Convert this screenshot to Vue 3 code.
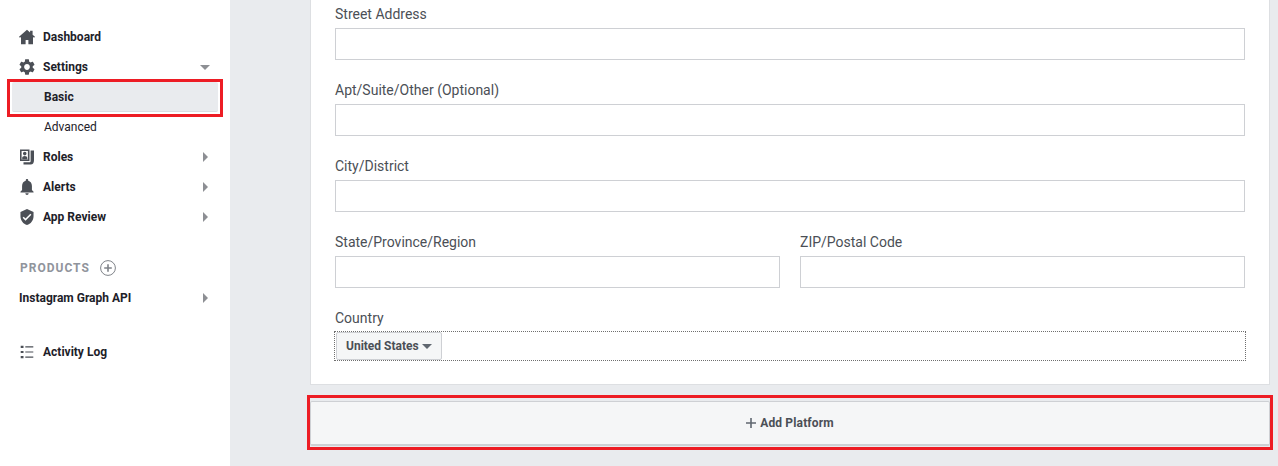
<script setup>
const form = [
  [{ label: 'Street Address' }],
  [{ label: 'Apt/Suite/Other (Optional)' }],
  [{ label: 'City/District' }],
  [{ label: 'State/Province/Region' }, { label: 'ZIP/Postal Code' }],
]
</script>

<template>
  <div class="page">
    <aside class="sidebar">
      <nav class="nav">
        <a class="item">
          <svg class="icon" viewBox="0 1 16 14.5"><path d="M8 1 0 8l.9 1.1L2 8.2v7.3h4.6v-4.3h2.8v4.3H14V8.2l1.1.9L16 8l-2.4-2.1V2h-2.5v1.7z" /></svg>
          <span>Dashboard</span>
        </a>
        <a class="item">
          <svg class="icon" viewBox="2.3 2 19.4 20"><path d="M19.14 12.94c.04-.3.06-.61.06-.94 0-.32-.02-.64-.07-.94l2.03-1.58c.18-.14.23-.41.12-.61l-1.92-3.32c-.12-.22-.37-.29-.59-.22l-2.39.96c-.5-.38-1.03-.7-1.62-.94l-.36-2.54c-.04-.24-.24-.41-.48-.41h-3.84c-.24 0-.43.17-.47.41l-.36 2.54c-.59.24-1.13.57-1.62.94l-2.39-.96c-.22-.08-.47 0-.59.22L2.74 8.87c-.12.21-.08.47.12.61l2.03 1.58c-.05.3-.09.63-.09.94s.02.64.07.94l-2.03 1.58c-.18.14-.23.41-.12.61l1.92 3.32c.12.22.37.29.59.22l2.39-.96c.5.38 1.03.7 1.62.94l.36 2.54c.05.24.24.41.48.41h3.84c.24 0 .44-.17.47-.41l.36-2.54c.59-.24 1.13-.56 1.62-.94l2.39.96c.22.08.47 0 .59-.22l1.92-3.32c.12-.22.07-.47-.12-.61l-2.01-1.58zM12 15.6c-1.98 0-3.6-1.62-3.6-3.6s1.62-3.6 3.6-3.6 3.6 1.62 3.6 3.6-1.62 3.6-3.6 3.6z" /></svg>
          <span>Settings</span>
          <i class="caret-down"></i>
        </a>
        <a class="sub active">Basic</a>
        <a class="sub">Advanced</a>
        <a class="item">
          <svg class="icon" viewBox="0 0 16 16"><path fill-rule="evenodd" d="M1 .5h9.5v11.5H1zM2.6 2v8.5h6.3V2z" /><path d="M5.75 2.8a1.8 1.8 0 1 1 0 3.6 1.8 1.8 0 0 1 0-3.6zM3.2 10.5V8.9c0-1 1.2-1.8 2.55-1.8s2.55.8 2.55 1.8v1.6z" /><path d="M11.6 1.5H15v9.7c0 2.8-1.2 4.3-3.4 4.3H4.5v-2.2h6c.8 0 1.1-.5 1.1-1.3z" /></svg>
          <span>Roles</span>
          <i class="caret-right"></i>
        </a>
        <a class="item">
          <svg class="icon" viewBox="3.5 2.5 17 19.5"><path d="M12 22c1.1 0 2-.9 2-2h-4c0 1.1.89 2 2 2zm6-6v-5c0-3.07-1.64-5.64-4.5-6.32V4c0-.83-.67-1.5-1.5-1.5s-1.5.67-1.5 1.5v.68C7.63 5.36 6 7.92 6 11v5l-2 2v1h16v-1l-2-2z" /></svg>
          <span>Alerts</span>
          <i class="caret-right"></i>
        </a>
        <a class="item">
          <svg class="icon" viewBox="2.5 1 19 22"><path d="M12 1 3 5v6c0 5.55 3.84 10.74 9 12 5.16-1.26 9-6.45 9-12V5l-9-4zm-2 16-4-4 1.41-1.41L10 14.17l6.59-6.59L18 9l-8 8z" /></svg>
          <span>App Review</span>
          <i class="caret-right"></i>
        </a>
      </nav>

      <div class="products">
        <span>PRODUCTS</span>
        <svg class="add" viewBox="0 0 16 16"><circle cx="8" cy="8" r="7.4" /><path d="M8 4.2v7.6M4.2 8h7.6" /></svg>
      </div>
      <a class="item plain">
        <span>Instagram Graph API</span>
        <i class="caret-right"></i>
      </a>

      <a class="item log">
        <svg class="icon" viewBox="0 0 16 16"><path d="M1.7 1.7h2.8v2.2H1.7zM1.7 6.9h2.8v2.2H1.7zM1.7 12.1h2.8v2.2H1.7zM6.3 2.2h8v1.2h-8zM6.3 7.4h8v1.2h-8zM6.3 12.6h8v1.2h-8z" /></svg>
        <span>Activity Log</span>
      </a>

      <div class="mark mark-basic"></div>
    </aside>

    <main class="main">
      <section class="card">
        <div v-for="(row, r) in form" :key="r" class="row">
          <div v-for="field in row" :key="field.label" class="field">
            <label>{{ field.label }}</label>
            <div class="input"></div>
          </div>
        </div>
        <div class="country">
          <label>Country</label>
          <div class="select">
            <button class="select-btn">United States<i class="caret-small"></i></button>
          </div>
        </div>
      </section>

      <button class="platform">
        <svg class="plus" viewBox="0 0 10 10"><path d="M5 0v10M0 5h10" /></svg>
        <span class="platform-text">Add Platform</span>
      </button>
      <div class="mark mark-platform"></div>
    </main>
  </div>
</template>

<style scoped>
.page {
  position: relative;
  display: flex;
  width: 1278px;
  height: 466px;
  overflow: hidden;
  background: #e9ebee;
  font-family: Roboto, "Liberation Sans", sans-serif;
}

.sidebar {
  position: relative;
  flex: 0 0 230px;
  box-sizing: border-box;
  padding-top: 22px;
  background: #fff;
}

.item {
  display: flex;
  align-items: center;
  height: 30px;
  padding: 0 20px 0 19px;
  color: #1d2129;
  font-size: 12px;
  font-weight: 700;
}

.icon {
  flex: 0 0 16px;
  width: 16px;
  height: 16px;
  margin-right: 8px;
  fill: #4b4f56;
}

.sub {
  display: flex;
  align-items: center;
  height: 30px;
  margin: 0 12px;
  padding-left: 32px;
  box-sizing: border-box;
  color: #1d2129;
  font-size: 12px;
}

.sub.active {
  border-bottom: 1px solid #dadde1;
  border-radius: 2px;
  background: #e9ebee;
  font-weight: 700;
}

.caret-right {
  width: 0;
  height: 0;
  margin-left: auto;
  margin-right: 2px;
  border-top: 5px solid transparent;
  border-bottom: 5px solid transparent;
  border-left: 5px solid #8d8f94;
}

.caret-down {
  width: 0;
  height: 0;
  margin-left: auto;
  margin-right: 0;
  border-left: 5px solid transparent;
  border-right: 5px solid transparent;
  border-top: 5px solid #8d8f94;
}

.products {
  display: flex;
  align-items: center;
  height: 30px;
  margin-top: 21px;
  padding-left: 20px;
  color: #90949c;
  font-size: 12px;
  font-weight: 700;
  letter-spacing: 1px;
}

.add {
  width: 16px;
  height: 16px;
  margin-left: 10px;
  fill: none;
  stroke: #7f8389;
}

.add path {
  stroke-width: 1.6;
}

.log {
  margin-top: 24px;
}

.main {
  position: relative;
  flex: 1;
  padding-left: 80px;
}

.card {
  box-sizing: border-box;
  width: 960px;
  height: 385px;
  padding: 4px 24px 0;
  border: 1px solid #dddfe2;
  border-top: 0;
  background: #fff;
}

.row {
  display: flex;
  gap: 20px;
  margin-bottom: 20px;
}

.field {
  flex: 1;
}

label {
  display: block;
  height: 20px;
  margin-bottom: 4px;
  color: #4b4f56;
  font-size: 14px;
  line-height: 20px;
}

.input {
  box-sizing: border-box;
  height: 32px;
  border: 1px solid #ced0d4;
  background: #fff;
}

.country label {
  margin-bottom: 3px;
}

.select {
  box-sizing: border-box;
  display: flex;
  height: 30px;
  margin: 0 -1px;
  border: 1px dotted #6f6f6f;
}

.select-btn {
  box-sizing: border-box;
  display: flex;
  align-items: center;
  width: 106px;
  height: 28px;
  margin-left: 1px;
  padding: 0 0 0 9px;
  border: 1px solid #ced0d4;
  border-radius: 2px;
  background: #f5f6f7;
  color: #4b4f56;
  font-family: inherit;
  font-size: 12px;
  font-weight: 700;
}

.caret-small {
  width: 0;
  height: 0;
  margin-left: 3px;
  border-left: 5px solid transparent;
  border-right: 5px solid transparent;
  border-top: 5px solid #606770;
}

.platform {
  display: flex;
  align-items: center;
  justify-content: center;
  gap: 4px;
  box-sizing: border-box;
  width: 960px;
  height: 45px;
  margin-top: 16px;
  padding: 0;
  border: 1px solid #ced0d4;
  border-bottom-width: 2px;
  border-radius: 2px;
  background: #f5f6f7;
  color: #4b4f56;
  font-family: inherit;
  font-size: 12px;
  font-weight: 700;
}

.platform-text {
  letter-spacing: 0.15px;
}

.plus {
  width: 10px;
  height: 10px;
  fill: none;
  stroke: #606770;
  stroke-width: 1.6;
}

.mark {
  position: absolute;
  box-sizing: border-box;
  border: 3px solid #ed1c24;
  pointer-events: none;
}

.mark-basic {
  left: 7px;
  top: 79px;
  width: 216px;
  height: 38px;
}

.mark-platform {
  left: 77px;
  top: 395px;
  width: 966px;
  height: 55px;
}
</style>
